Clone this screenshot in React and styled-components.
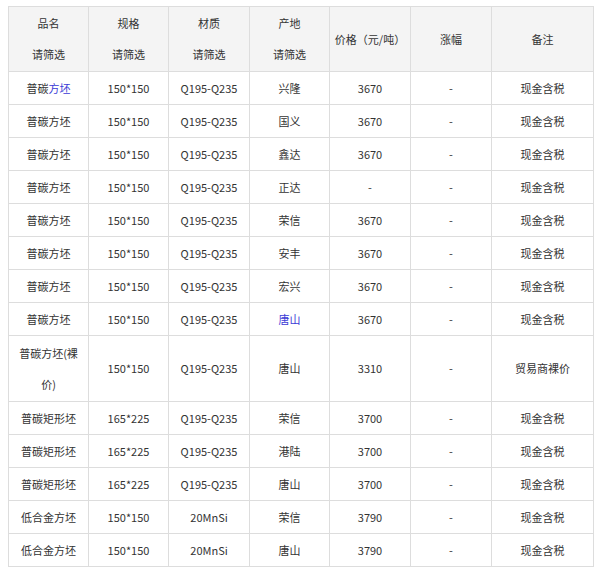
import React from "react";
import styled, { createGlobalStyle } from "styled-components";

const G = createGlobalStyle`
  body { margin: 0; background: #fff; font-family: "Noto Sans CJK SC", "Open Sans", sans-serif; }
`;
const Wrap = styled.div`padding: 6px 8px;`;
const Table = styled.table`
  border-collapse: collapse; table-layout: fixed; width: 585px;
  font-size: 11px; color: #333;
`;
const Th = styled.th`
  background: #f4f4f4; font-weight: normal; border: 1px solid #ddd;
  height: 64px; padding: 0; line-height: 31px; text-align: center;
`;
const Td = styled.td`
  border: 1px solid #ddd; height: ${p => (p.$tall ? 65 : 32)}px; padding: 0 4px;
  text-align: center; line-height: ${p => (p.$tall ? "31px" : "16px")};
  word-break: break-all;
`;
const Blue = styled.span`color: #3b3bd6;`;

const widths = [80, 80, 81, 80, 81, 81, 102];
const rows = [
  [<>普碳<Blue>方坯</Blue></>, "150*150", "Q195-Q235", "兴隆", "3670", "-", "现金含税"],
  ["普碳方坯", "150*150", "Q195-Q235", "国义", "3670", "-", "现金含税"],
  ["普碳方坯", "150*150", "Q195-Q235", "鑫达", "3670", "-", "现金含税"],
  ["普碳方坯", "150*150", "Q195-Q235", "正达", "-", "-", "现金含税"],
  ["普碳方坯", "150*150", "Q195-Q235", "荣信", "3670", "-", "现金含税"],
  ["普碳方坯", "150*150", "Q195-Q235", "安丰", "3670", "-", "现金含税"],
  ["普碳方坯", "150*150", "Q195-Q235", "宏兴", "3670", "-", "现金含税"],
  ["普碳方坯", "150*150", "Q195-Q235", <Blue>唐山</Blue>, "3670", "-", "现金含税"],
  ["普碳方坯(裸价)", "150*150", "Q195-Q235", "唐山", "3310", "-", "贸易商裸价", true],
  ["普碳矩形坯", "165*225", "Q195-Q235", "荣信", "3700", "-", "现金含税"],
  ["普碳矩形坯", "165*225", "Q195-Q235", "港陆", "3700", "-", "现金含税"],
  ["普碳矩形坯", "165*225", "Q195-Q235", "唐山", "3700", "-", "现金含税"],
  ["低合金方坯", "150*150", "20MnSi", "荣信", "3790", "-", "现金含税"],
  ["低合金方坯", "150*150", "20MnSi", "唐山", "3790", "-", "现金含税"],
];
const heads = [["品名", "请筛选"], ["规格", "请筛选"], ["材质", "请筛选"], ["产地", "请筛选"], ["价格（元/吨）"], ["涨幅"], ["备注"]];

export default function App() {
  return (
    <Wrap>
      <G />
      <Table>
        <colgroup>{widths.map((w, i) => <col key={i} style={{ width: w }} />)}</colgroup>
        <thead>
          <tr>{heads.map((h, i) => <Th key={i}>{h.map((t, j) => <div key={j}>{t}</div>)}</Th>)}</tr>
        </thead>
        <tbody>
          {rows.map((r, i) => (
            <tr key={i}>
              {r.slice(0, 7).map((c, j) => <Td key={j} $tall={r[7]}>{c}</Td>)}
            </tr>
          ))}
        </tbody>
      </Table>
    </Wrap>
  );
}
